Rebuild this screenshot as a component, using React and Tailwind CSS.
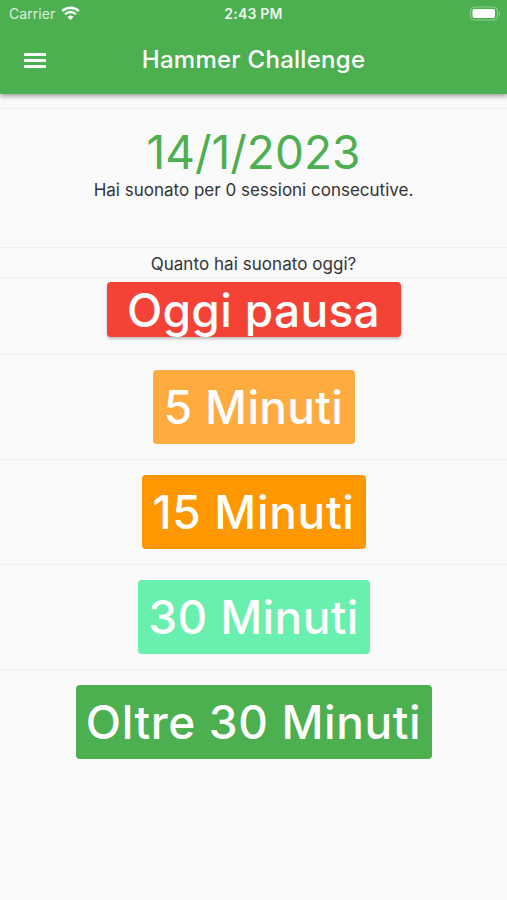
import React from 'react';

const minuti = [
  { label: '5 Minuti', className: 'w-[202px] bg-[#ffab40] tracking-[0.35px]' },
  { label: '15 Minuti', className: 'w-[224px] bg-[#ff9800] tracking-[0.7px]' },
  { label: '30 Minuti', className: 'w-[232px] bg-[#69f0ae] tracking-[0.4px]' },
  { label: 'Oltre 30 Minuti', className: 'w-[356px] bg-[#4caf50] tracking-[0.6px]' },
];

const StatusBar = () => (
  <div className="grid grid-cols-3 items-center h-[28px] px-[9px] text-[14px] leading-none">
    <div className="flex items-center gap-[6px] text-white/80">
      <span className="tracking-[0.05px]">Carrier</span>
      <svg className="mb-[2px]" width="19" height="15" viewBox="0 0 19 15" fill="none" stroke="white">
        <path d="M1.2 5.1a11.8 11.8 0 0 1 16.6 0" strokeWidth="2.5" />
        <path d="M4.1 8.2a7.7 7.7 0 0 1 10.8 0" strokeWidth="2.3" />
        <path d="M9.5 14 6.5 11a4.3 4.3 0 0 1 6 0Z" fill="white" stroke="none" />
      </svg>
    </div>
    <span className="text-center font-semibold tracking-[0.2px] text-white/90 whitespace-nowrap">2:43 PM</span>
    <svg className="justify-self-end mr-[-3px] mb-[2px]" width="32" height="15" viewBox="0 0 32 15">
      <rect x="1.5" y="1" width="27" height="13" rx="4" fill="none" stroke="white" strokeOpacity="0.4" />
      <rect x="3.5" y="3" width="22.5" height="9" rx="2" fill="white" />
      <path d="M30 5.2c1.6.7 1.6 3.9 0 4.6Z" fill="white" fillOpacity="0.4" />
    </svg>
  </div>
);

const App = () => {
  return (
    <div className="flex flex-col h-[900px] w-full overflow-hidden bg-[#fafafa] font-['Inter',sans-serif] text-[#333]">
      <header className="relative z-10 h-[94px] shrink-0 bg-[#4caf50] shadow-[0_2px_5px_rgba(0,0,0,0.4)]">
        <StatusBar />
        <div className="grid grid-cols-[1fr_auto_1fr] items-center h-[64px] px-6">
          <button type="button" aria-label="Menu" className="flex w-[22px] flex-col gap-[3px]">
            <span className="h-[3px] bg-white/95" />
            <span className="h-[3px] bg-white/95" />
            <span className="h-[3px] bg-white/95" />
          </button>
          <h1 className="text-[24px] leading-none font-medium tracking-[0.27px] text-white whitespace-nowrap">Hammer Challenge</h1>
        </div>
      </header>

      <main className="flex flex-col pt-[14px]">
        <section className="flex h-[139px] flex-col items-center border-t border-[#f1f1f1] pt-[18px]">
          <p className="text-[46px] leading-[50px] tracking-[0px] text-[#4caf50]">14/1/2023</p>
          <p className="mt-[2px] text-[17px] leading-[22px]">Hai suonato per 0 sessioni consecutive.</p>
        </section>

        <div className="flex h-[30px] items-center justify-center border-t border-[#f1f1f1] pt-[4px]">
          <p className="text-[17px] leading-none tracking-[0.05px]">Quanto hai suonato oggi?</p>
        </div>

        <div className="flex h-[77px] justify-center border-t border-[#f1f1f1] pt-[4px]">
          <button type="button" className="flex h-[55px] w-[294px] items-center justify-center rounded-[4px] bg-[#f44336] text-[46px] leading-none font-medium tracking-[0.35px] text-white whitespace-nowrap shadow-[0_2px_3px_rgba(0,0,0,0.25)]">
            Oggi pausa
          </button>
        </div>

        {minuti.map((m) => (
          <div key={m.label} className="flex h-[105px] items-center justify-center border-t border-[#f1f1f1]">
            <button
              type="button"
              className={`flex h-[74px] items-center justify-center rounded-[4px] text-[46px] leading-none font-medium text-white whitespace-nowrap ${m.className}`}
            >
              {m.label}
            </button>
          </div>
        ))}
      </main>
    </div>
  );
};

export default App;
